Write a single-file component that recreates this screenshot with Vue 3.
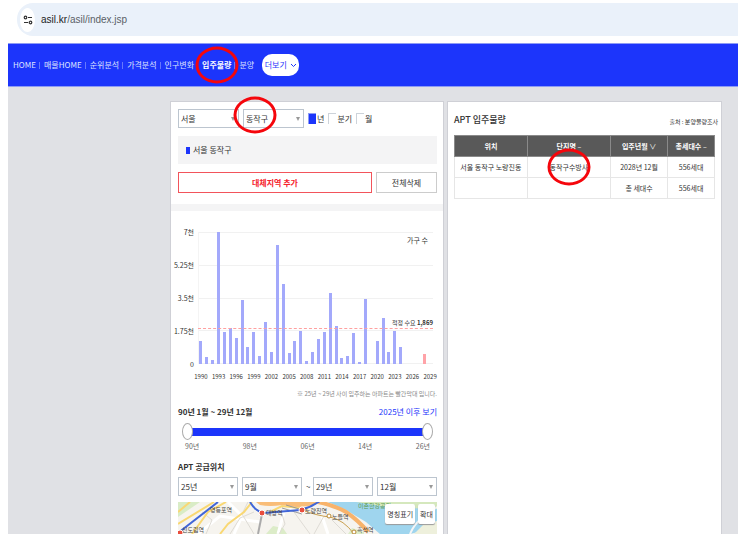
<script setup>
import { computed, ref } from 'vue'

const menu = ['HOME', '매물HOME', '순위분석', '가격분석', '인구변화', '입주물량', '분양']

const city = ref('서울')
const district = ref('동작구')
const unit = ref('년')
const units = ['년', '분기', '월']

const FIRST_YEAR = 1990
const MAX = 7000
const DEMAND = 1869
const supply = [
  1240, 354, 213, 7000, 1719, 1914, 1382, 3402, 904, 1719,
  425, 2215, 638, 6326, 4218, 585, 1205, 1754, 177, 638,
  1329, 1719, 3792, 2038, 319, 443, 1630, 89, 3473, 0,
  1240, 2428, 638, 1772, 886, 0, 0, 0, 556, 0,
]
const bars = computed(() =>
  supply.map((count, i) => ({
    year: FIRST_YEAR + i,
    height: `${(count / MAX) * 100}%`,
    upcoming: FIRST_YEAR + i >= 2025,
  })),
)
const yLabels = ['7천', '5.25천', '3.5천', '1.75천', '0']

const from = ref(1990)
const to = ref(2029)
const ticks = ['90년', '98년', '06년', '14년', '26년']

const period = ref(['25년', '9월', '29년', '12월'])
const periodLabels = ['시작 연도', '시작 월', '종료 연도', '종료 월']

const rows = [
  { place: '서울 동작구 노량진동', name: '동작구수방사', date: '2028년 12월', total: '556세대' },
  { place: '', name: '', date: '총 세대수', total: '556세대' },
]
</script>

<template>
  <div class="page">
    <div class="address">
      <span class="site-info">
        <svg width="10" height="10" viewBox="0 0 10 10" fill="none" stroke="#333" stroke-width="1.2">
          <circle cx="2.5" cy="2.5" r="1.3" />
          <path d="M5 2.5h4M1 7.5h4" />
          <circle cx="7.5" cy="7.5" r="1.3" />
        </svg>
      </span>
      <span class="url"><b>asil.kr</b>/asil/index.jsp</span>
    </div>

    <nav class="nav">
      <a
        v-for="item in menu"
        :key="item"
        href="#"
        :class="{ active: item === '입주물량', marked: item === '입주물량' }"
      >{{ item }}</a>
      <button class="more">
        더보기
        <svg width="7" height="5" viewBox="0 0 7 5" fill="none" stroke="currentColor">
          <path d="M1 1l2.5 2.5L6 1" />
        </svg>
      </button>
    </nav>

    <main class="stage">
      <section class="panel left">
        <div class="filters">
          <span class="pick">
            <select v-model="city" aria-label="시도">
              <option>서울</option>
            </select>
          </span>
          <span class="pick marked">
            <select v-model="district" aria-label="시군구">
              <option>동작구</option>
            </select>
          </span>
          <div class="units">
            <label v-for="u in units" :key="u">
              <input v-model="unit" type="radio" name="unit" :value="u" />{{ u }}
            </label>
          </div>
        </div>

        <div class="region"><i></i>서울 동작구</div>

        <div class="actions">
          <button class="add">대체지역 추가</button>
          <button class="clear">전체삭제</button>
        </div>

        <div class="band"></div>

        <div class="chart">
          <div class="y-axis">
            <span v-for="y in yLabels" :key="y">{{ y }}</span>
          </div>
          <div class="plot">
            <div class="grid">
              <i v-for="y in yLabels" :key="y"></i>
            </div>
            <div class="bars">
              <div v-for="b in bars" :key="b.year" class="col">
                <div class="bar" :class="{ upcoming: b.upcoming }" :style="{ height: b.height }"></div>
              </div>
            </div>
            <span class="legend">가구 수</span>
            <div class="demand" :style="{ bottom: `${(DEMAND / MAX) * 100}%` }">
              <span>적정 수요 <b>1,869</b></span>
            </div>
          </div>
          <div class="x-axis">
            <div v-for="b in bars" :key="b.year" class="col">
              <span v-if="(b.year - FIRST_YEAR) % 3 === 0">{{ b.year }}</span>
            </div>
          </div>
        </div>
        <p class="note">※ 25년 ~ 29년 사이 입주하는 아파트는 빨간막대 입니다.</p>

        <div class="range-head">
          <strong>90년 1월 ~ 29년 12월</strong>
          <a href="#">2025년 이후 보기</a>
        </div>
        <div class="slider">
          <div class="track"></div>
          <input v-model.number="from" type="range" min="1990" max="2029" aria-label="시작" />
          <input v-model.number="to" type="range" min="1990" max="2029" aria-label="종료" />
        </div>
        <div class="ticks">
          <span v-for="t in ticks" :key="t">{{ t }}</span>
        </div>

        <h3>APT 공급위치</h3>
        <div class="period">
          <template v-for="(p, i) in period" :key="i">
            <span v-if="i === 2" class="tilde">~</span>
            <span class="pick">
              <select v-model="period[i]" :aria-label="periodLabels[i]">
                <option>{{ p }}</option>
              </select>
            </span>
          </template>
        </div>

        <div class="map">
          <svg viewBox="0 0 259 32" preserveAspectRatio="xMidYMin slice">
            <rect width="259" height="32" fill="#f6f4ef" />
            <path d="M0 0h22L0 15z" fill="#d9ecc6" />
            <path d="M88 32l7-8 10 2 4 6zM170 32l4-6 12 4v2z" fill="#dcecc8" />
            <path d="M150 0H259V25L240 30l-8 2H202L188 20 168 8z" fill="#9fd5ee" />
            <path d="M178 0h81v7l-30-1-26-2z" fill="#d5e8bd" />
            <path d="M236 32l10-10 13-3v13z" fill="#eef0dc" />
            <g fill="none" stroke="#fff" stroke-width="3">
              <path d="M50 0l14 14-8 18M100 32l6-22 22-8M150 32l-6-18M20 32L42 14l40 6" />
            </g>
            <g fill="none" stroke="#dedbd5">
              <path d="M70 0l-6 12 12 20M104 12l3 10-6 10M116 10l16 22M146 14l-10 18M154 18l14 14M24 10l10 8-6 14M52 32l10-16 14-6" />
            </g>
            <g fill="none" stroke="#f9d873" stroke-width="2">
              <path d="M0 22L36 0M14 32L30 10 48 0M42 32l8-10 16-12 8-10M92 10l12-6 26 3M0 10l12-10" />
            </g>
            <path d="M140 0q18 4 28 10 12 8 22 20" fill="none" stroke="#f8b36b" stroke-width="4" />
            <path d="M78 0h66l-8 3q-12 2-18 2l-14-2q-12 2-22 0z" fill="#f9bd78" />
            <path d="M232 32q4-10 14-18l13-9" fill="none" stroke="#f6f6f6" stroke-width="2" />
            <path d="M84 12l-4 20" stroke="#aaa" stroke-width="2" />
            <path d="M104 6l20 6M108 3l20 6" stroke="#999" fill="none" />
            <g fill="none" stroke="#4166d8" stroke-width="2">
              <path d="M0 31L40 0M72 0q6 10 14 11l36-3q10-2 20-9" />
            </g>
            <path d="M124 8q16 6 28 7 14 3 24 17" fill="none" stroke="#c9a04f" />
            <g fill="#e94d3d" stroke="#fff">
              <circle cx="84" cy="11" r="3" />
              <circle cx="124" cy="8" r="3" />
              <circle cx="2" cy="31" r="3" />
            </g>
            <g fill="#fff" stroke="#b98832">
              <circle cx="151" cy="14" r="2" />
              <circle cx="176" cy="30" r="2" />
            </g>
            <g class="places">
              <text x="32" y="10">영등포역</text>
              <text x="88" y="13">대방역</text>
              <text x="127" y="11">노량진역</text>
              <text x="154" y="17">노들역</text>
              <text x="4" y="30">신도림역</text>
              <text x="179" y="30">흑석역</text>
              <text x="180" y="6" class="park">이촌한강공원</text>
            </g>
          </svg>
          <div class="map-tools">
            <button>명칭표기</button>
            <button>확대</button>
          </div>
        </div>
      </section>

      <section class="panel right">
        <header>
          <h2>APT 입주물량</h2>
          <span>출처 : 분양물량조사</span>
        </header>
        <table>
          <thead>
            <tr>
              <th class="w-place">위치</th>
              <th class="w-name">단지명 <i>–</i></th>
              <th class="w-date">입주년월 <i>∨</i></th>
              <th>총세대수 <i>–</i></th>
            </tr>
          </thead>
          <tbody>
            <tr v-for="(r, i) in rows" :key="i">
              <td>{{ r.place }}</td>
              <td><span v-if="r.name" class="marked">{{ r.name }}</span></td>
              <td>{{ r.date }}</td>
              <td>{{ r.total }}</td>
            </tr>
          </tbody>
        </table>
      </section>
    </main>
  </div>
</template>

<style>
body {
  margin: 0;
  background: #fff;
}
</style>

<style scoped>
.page {
  padding: 3px 7px 0 8px;
  font-family: 'Noto Sans CJK KR', sans-serif;
  font-size: 8px;
  line-height: 12px;
  color: #333;
}

.page *,
.page *::before,
.page *::after {
  box-sizing: border-box;
}

button,
select,
input {
  margin: 0;
  font: inherit;
  color: inherit;
}

a {
  color: inherit;
  text-decoration: none;
}

.address {
  display: flex;
  align-items: center;
  gap: 6px;
  height: 33px;
  margin-left: 9px;
  padding-left: 3px;
  background: #eaf1fa;
  border-radius: 16px 0 0 16px;
}

.site-info {
  display: flex;
  align-items: center;
  justify-content: center;
  width: 15px;
  height: 24px;
  background: #fff;
  border-radius: 50%;
}

.url {
  font-family: 'Liberation Sans', sans-serif;
  font-size: 10px;
  color: #5a5f66;
}

.url b {
  font-weight: 400;
  color: #222;
}

.nav {
  display: flex;
  align-items: center;
  height: 44px;
  margin-top: 7px;
  padding-left: 5px;
  background: #1c35fb;
  border-top: 1px solid #8d9bf5;
  border-bottom: 1px solid #8d9bf5;
  color: #dfe4ff;
  white-space: nowrap;
}

.nav a {
  position: relative;
}

.nav a + a {
  margin-left: 8px;
}

.nav a + a::before {
  content: '';
  position: absolute;
  left: -5px;
  top: 3px;
  height: 7px;
  border-left: 1px solid #6678fb;
}

.nav a.active {
  font-weight: 700;
  color: #fff;
}

.more {
  display: flex;
  align-items: center;
  justify-content: center;
  gap: 3px;
  width: 37px;
  height: 22px;
  margin-left: 8px;
  padding: 0;
  border: 0;
  border-radius: 10px;
  background: #fff;
  color: #1c35fb;
}

/* highlight rings */
.marked {
  position: relative;
}

.marked::after {
  content: '';
  position: absolute;
  z-index: 2;
  left: 50%;
  top: 50%;
  width: 43px;
  height: 37px;
  border: 3px solid #f5060c;
  border-radius: 50%;
  transform: translate(-50%, -50%);
  pointer-events: none;
}

.stage {
  display: grid;
  grid-template-columns: 162fr 274fr 278fr 16fr;
  padding-top: 14px;
  background: #e0e1e5;
}

.panel {
  background: #fff;
  border: 1px solid #cfd0d6;
  border-bottom: 0;
}

.left {
  grid-column: 2;
  padding-top: 7px;
  min-width: 0;
}

.left > * {
  margin-left: 7px;
  margin-right: 6px;
}

.right {
  grid-column: 3;
  margin-left: 3px;
  padding: 10px 6px 0;
}

.filters,
.period,
.actions {
  display: flex;
  align-items: center;
  gap: 4px;
}

.pick {
  position: relative;
  width: 61px;
}

.pick select {
  display: block;
  width: 100%;
  height: 19px;
  padding: 0 2px;
  border: 1px solid #bcc5cf;
  border-radius: 0;
  background: #fff;
  appearance: none;
}

.pick::before {
  content: '';
  position: absolute;
  right: 4px;
  top: 8px;
  border: 2px solid transparent;
  border-top: 4px solid #999;
  border-bottom: 0;
}

.filters .marked::after {
  left: 12px;
  top: 6px;
}

.units {
  display: flex;
  gap: 4px;
}

.units label {
  display: flex;
  align-items: center;
  gap: 1px;
}

.units input {
  width: 8px;
  height: 11px;
  border: 1px solid #cdd3da;
  border-right: 0;
  border-bottom: 0;
  appearance: none;
}

.units input:checked {
  background: #1c35fb;
  border-color: #8d9bf5;
}

.region {
  display: flex;
  align-items: center;
  gap: 3px;
  height: 28px;
  margin-top: 8px;
  padding-left: 8px;
  background: #f4f4f5;
}

.region i {
  width: 4px;
  height: 7px;
  background: #1c35fb;
}

.actions {
  margin-top: 8px;
}

.actions button {
  height: 21px;
  padding: 0;
  background: #fff;
  border: 1px solid #ccc;
}

.actions .add {
  flex: 1;
  border-color: #f2545b;
  color: #f5222d;
  font-weight: 700;
}

.actions .clear {
  width: 61px;
}

.left > .band {
  height: 7px;
  margin: 11px 0 21px;
  background: #f4f4f5;
}

.chart {
  display: grid;
  grid-template-columns: 16px 1fr;
  column-gap: 4px;
  padding-right: 4px;
  font-size: 7px;
}

.y-axis {
  display: flex;
  flex-direction: column;
  justify-content: space-between;
  height: 144px;
  margin: -6px 0;
  white-space: nowrap;
}

.y-axis span {
  align-self: flex-end;
}

.plot {
  position: relative;
  height: 132px;
}

.grid {
  position: absolute;
  inset: 0;
  display: flex;
  flex-direction: column;
  justify-content: space-between;
  border-left: 1px solid #f4f4f4;
}

.grid i {
  border-top: 1px solid #f1f1f1;
}

.bars,
.x-axis {
  display: flex;
}

.bars {
  position: relative;
  height: 100%;
  align-items: flex-end;
}

.col {
  display: flex;
  flex: 1 1 0;
  justify-content: center;
  align-items: flex-end;
  width: 0;
  height: 100%;
}

.bar {
  width: 3px;
  flex: none;
  background: #a3a9fb;
}

.bar.upcoming {
  background: #ffa3a8;
}

.legend {
  position: absolute;
  right: 5px;
  top: 2px;
}

.demand {
  position: absolute;
  left: 0;
  right: 0;
  border-top: 1px dashed #ffa0a0;
}

.demand span {
  position: absolute;
  right: 0;
  bottom: 0;
  font-size: 6px;
  white-space: nowrap;
}

.x-axis {
  grid-column: 2;
  height: 12px;
  margin-top: 7px;
  font-size: 6px;
}

.x-axis span {
  flex: none;
}

.note {
  margin-top: 5px;
  margin-bottom: 6px;
  font-size: 6px;
  text-align: right;
  white-space: nowrap;
  color: #888;
}

.range-head {
  display: flex;
  justify-content: space-between;
}

.range-head a {
  color: #1c35fb;
}

.slider {
  display: grid;
  align-items: center;
  margin-top: 5px;
  padding: 0 4px;
}

.slider > * {
  grid-area: 1 / 1;
}

.track {
  height: 8px;
  margin: 0 5px;
  background: #1c35fb;
}

.slider input {
  width: 100%;
  height: 17px;
  background: none;
  appearance: none;
  pointer-events: none;
}

.slider input::-webkit-slider-thumb {
  width: 11px;
  height: 17px;
  border: 1px solid #aaa;
  border-radius: 50%;
  background: #fff;
  appearance: none;
  pointer-events: auto;
}

.ticks {
  display: flex;
  justify-content: space-between;
  padding: 0 7px;
  font-size: 7px;
  color: #666;
}

h3 {
  margin-top: 9px;
  margin-bottom: 4px;
  font-size: 8px;
}

.period .pick {
  flex: 1;
  width: auto;
}

.period .tilde {
  width: 3px;
}

.map {
  position: relative;
  height: 32px;
  margin-top: 6px;
  overflow: hidden;
}

.map svg {
  display: block;
  width: 100%;
  height: 100%;
}

.places text {
  font-size: 6px;
  fill: #444;
}

.places .park {
  fill: #5b9a4e;
}

.map-tools {
  position: absolute;
  top: 2px;
  right: 2px;
  display: flex;
  gap: 3px;
}

.map-tools button {
  height: 20px;
  padding: 0 2px;
  font-size: 7px;
  background: #fff;
  border: 0;
  border-radius: 2px;
  box-shadow: 0 1px 1px #999;
}

header {
  display: flex;
  justify-content: space-between;
  align-items: flex-end;
  height: 16px;
}

header span {
  margin-right: -3px;
  font-size: 6px;
}

h2 {
  margin: 0;
  font-size: 9px;
  line-height: 16px;
  font-weight: 500;
}

table {
  width: 100%;
  margin-top: 7px;
  border-collapse: collapse;
  table-layout: fixed;
  font-size: 7px;
  line-height: 10px;
  text-align: center;
  white-space: nowrap;
}

th,
td {
  height: 21px;
  padding: 0;
  border: 1px solid #e6e6e6;
}

th {
  background: #595959;
  border-color: #8a8a8a;
  color: #fff;
}

th i {
  font-style: normal;
  font-weight: 400;
}

.w-place {
  width: 28%;
}

.w-name {
  width: 32%;
}

.w-date {
  width: 22%;
}
</style>
